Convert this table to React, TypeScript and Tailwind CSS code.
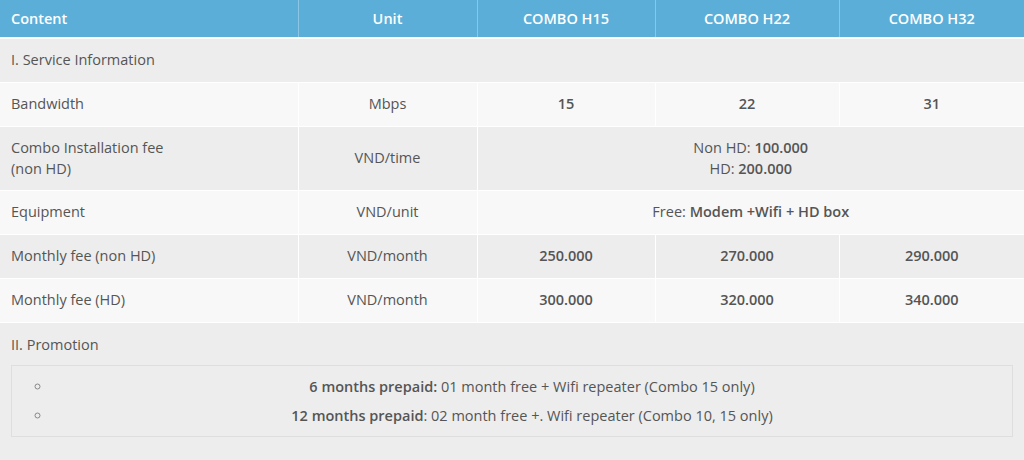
const cols = ['w-[298px]', 'w-[179px]', 'w-[178px]', 'w-[184px]', 'w-[185px]']

const head = ['Content', 'Unit', 'COMBO H15', 'COMBO H22', 'COMBO H32']

type Row = { label: React.ReactNode; unit: string; values: string[]; tone: string }

const rows: Row[] = [
  { label: 'Bandwidth', unit: 'Mbps', values: ['15', '22', '31'], tone: 'bg-[#f8f8f8]' },
  { label: 'Monthly fee (non HD)', unit: 'VND/month', values: ['250.000', '270.000', '290.000'], tone: 'bg-[#ededed]' },
  { label: 'Monthly fee (HD)', unit: 'VND/month', values: ['300.000', '320.000', '340.000'], tone: 'bg-[#f8f8f8]' },
]

function ValueRow({ row }: { row: Row }) {
  return (
    <tr className={`${row.tone} h-[44px] border-b border-white`}>
      <td className="px-[11px] border-r border-white">{row.label}</td>
      <td className="text-center border-r border-white">{row.unit}</td>
      {row.values.map((v, i) => (
        <td key={v} className={`text-center font-semibold text-[#555] ${i < 2 ? 'border-r border-white' : ''}`}>
          {v}
        </td>
      ))}
    </tr>
  )
}

export default function App() {
  return (
    <div className="w-[1024px] h-[460px] bg-[#ededed] text-[14.5px] text-[#555] font-['Open_Sans',sans-serif] overflow-hidden">
      <table className="w-full table-fixed border-collapse">
        <colgroup>
          {cols.map((c) => (
            <col key={c} className={c} />
          ))}
        </colgroup>
        <thead>
          <tr className="bg-[#5aaed8] text-white h-[38px] border-b-2 border-white">
            {head.map((h, i) => (
              <th
                key={h}
                className={`font-semibold ${i === 0 ? 'text-left px-[11px]' : 'text-center'} ${
                  i < 4 ? 'border-r border-[#8cc6e4]' : ''
                }`}
              >
                {h}
              </th>
            ))}
          </tr>
        </thead>
        <tbody>
          <tr className="bg-[#ededed] h-[44px] border-b border-white">
            <td colSpan={5} className="px-[11px]">
              I. Service Information
            </td>
          </tr>
          <ValueRow row={rows[0]} />
          <tr className="bg-[#ededed] h-[64px] border-b border-white">
            <td className="px-[11px] border-r border-white leading-[21px]">
              Combo Installation fee
              <br />
              (non HD)
            </td>
            <td className="text-center border-r border-white">VND/time</td>
            <td colSpan={3} className="text-center leading-[21px]">
              Non HD: <span className="font-semibold">100.000</span>
              <br />
              HD: <span className="font-semibold">200.000</span>
            </td>
          </tr>
          <tr className="bg-[#f8f8f8] h-[44px] border-b border-white">
            <td className="px-[11px] border-r border-white">Equipment</td>
            <td className="text-center border-r border-white">VND/unit</td>
            <td colSpan={3} className="text-center">
              Free: <span className="font-semibold">Modem +Wifi + HD box</span>
            </td>
          </tr>
          <ValueRow row={rows[1]} />
          <ValueRow row={rows[2]} />
        </tbody>
      </table>

      <div className="px-[11px] pt-[12px]">
        <p className="h-[19px] leading-[19px]">II. Promotion</p>
        <ul className="mt-[11px] w-[1002px] border border-[#dedede] pl-[40px] py-[6px] list-[circle] marker:text-[#888]">
          <li className="text-center leading-[29px]">
            <span className="font-semibold">6 months prepaid:</span> 01 month free + Wifi repeater (Combo 15 only)
          </li>
          <li className="text-center leading-[29px]">
            <span className="font-semibold">12 months prepaid</span>: 02 month free +. Wifi repeater (Combo 10, 15 only)
          </li>
        </ul>
      </div>
    </div>
  )
}
